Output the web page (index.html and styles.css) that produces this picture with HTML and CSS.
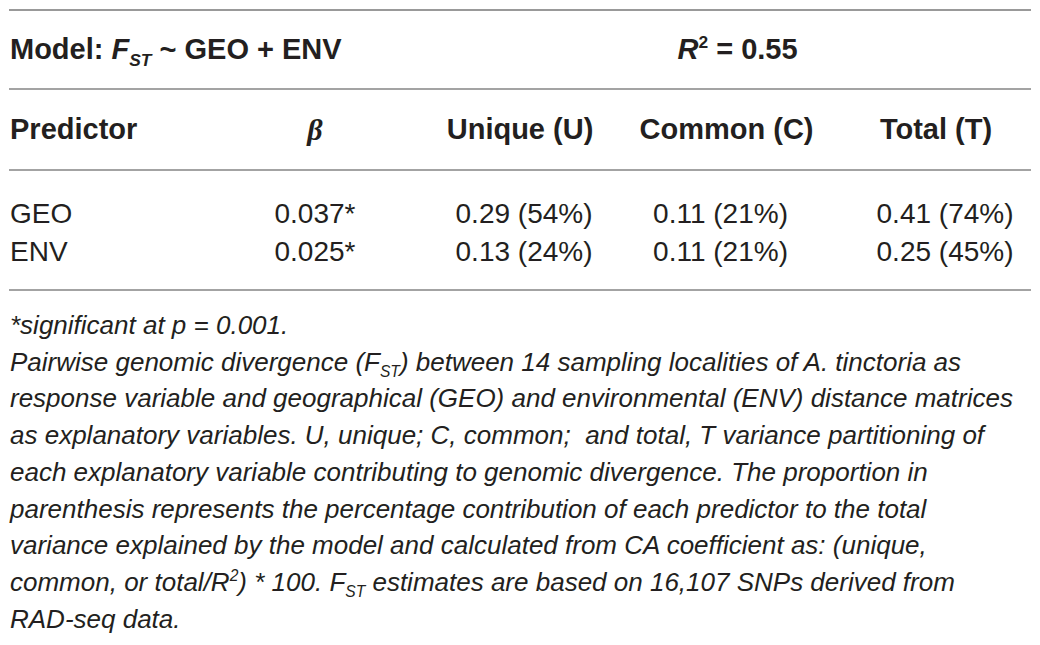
FILE: index.html
```html
<!DOCTYPE html>
<html lang="en">
<head>
    <meta charset="UTF-8">
    <title>Variance partitioning of genomic divergence</title>
    <link rel="stylesheet" href="styles.css">
</head>
<body>
    <div class="table-wrap">
        <table class="data-table">
            <colgroup>
                <col class="col-pred">
                <col class="col-beta">
                <col class="col-unique">
                <col class="col-common">
                <col class="col-total">
            </colgroup>
            <thead>
                <tr class="model-row">
                    <th colspan="2" class="left">Model: <i>F<sub>ST</sub></i> ~ GEO + ENV</th>
                    <th colspan="3" class="r2"><i>R</i><sup>2</sup> = 0.55</th>
                </tr>
                <tr class="head-row">
                    <th class="left">Predictor</th>
                    <th class="beta-cell"><span class="beta">&beta;</span></th>
                    <th>Unique (U)</th>
                    <th>Common (C)</th>
                    <th class="total-cell">Total (T)</th>
                </tr>
            </thead>
            <tbody>
                <tr class="first">
                    <td class="left">GEO</td>
                    <td class="beta-cell">0.037*</td>
                    <td class="unique-cell">0.29 (54%)</td>
                    <td class="common-cell">0.11 (21%)</td>
                    <td class="total-cell">0.41 (74%)</td>
                </tr>
                <tr class="last">
                    <td class="left">ENV</td>
                    <td class="beta-cell">0.025*</td>
                    <td class="unique-cell">0.13 (24%)</td>
                    <td class="common-cell">0.11 (21%)</td>
                    <td class="total-cell">0.25 (45%)</td>
                </tr>
            </tbody>
        </table>

        <p class="notes">
            *significant at p = 0.001.<br>
            Pairwise genomic divergence (F<sub>ST</sub>) between 14 sampling localities of A. tinctoria as<br>
            response variable and geographical (GEO) and environmental (ENV) distance matrices<br>
            as explanatory variables. U, unique; C, common;&nbsp; and total, T variance partitioning of<br>
            each explanatory variable contributing to genomic divergence. The proportion in<br>
            parenthesis represents the percentage contribution of each predictor to the total<br>
            variance explained by the model and calculated from CA coefficient as: (unique,<br>
            common, or total/R<sup>2</sup>) * 100. F<sub>ST</sub> estimates are based on 16,107 SNPs derived from<br>
            RAD-seq data.
        </p>
    </div>
</body>
</html>
```

FILE: styles.css
```css
/* Base */
* {
    box-sizing: border-box;
}

body {
    margin: 0;
    padding: 9px;
    background: #fff;
    color: #231f20;
    font-family: 'Liberation Sans', Arial, sans-serif;
}

.table-wrap {
    width: 1022px;
}

/* Table */
.data-table {
    width: 1022px;
    border-collapse: collapse;
    table-layout: fixed;
    border-top: 2px solid #999;
    border-bottom: 2px solid #a3a3a3;
}

.col-pred { width: 221px; }
.col-beta { width: 188px; }
.col-unique { width: 204px; }
.col-common { width: 209px; }
.col-total { width: 200px; }

th, td {
    padding: 0;
    text-align: center;
    white-space: nowrap;
}

th {
    font-weight: bold;
    font-size: 29px;
}

td {
    font-size: 28px;
}

.left {
    text-align: left;
    padding-left: 1px;
}

.model-row th {
    height: 79px;
    border-bottom: 2px solid #a3a3a3;
}

.model-row .r2 {
    padding-left: 26px;
}

.head-row th {
    height: 81px;
    border-bottom: 2px solid #a3a3a3;
}

.beta-cell {
    padding-right: 18px;
}

.total-cell {
    padding-left: 10px;
}

td.unique-cell {
    padding-left: 8px;
}

td.common-cell {
    padding-right: 12px;
}

td.total-cell {
    padding-left: 28px;
}

.beta {
    font-family: 'Liberation Serif', 'Times New Roman', serif;
    font-style: italic;
    font-size: 30px;
}

tbody td {
    height: 39px;
}

tbody tr.first td {
    height: 63px;
    padding-top: 24px;
}

tbody tr.last td {
    height: 57px;
    padding-bottom: 18px;
}

sub, sup {
    font-size: 0.6em;
    line-height: 0;
}

/* Notes under the table */
.notes {
    margin: 16px 0 0 1px;
    font-style: italic;
    font-size: 26px;
    line-height: 36.7px;
}
```
